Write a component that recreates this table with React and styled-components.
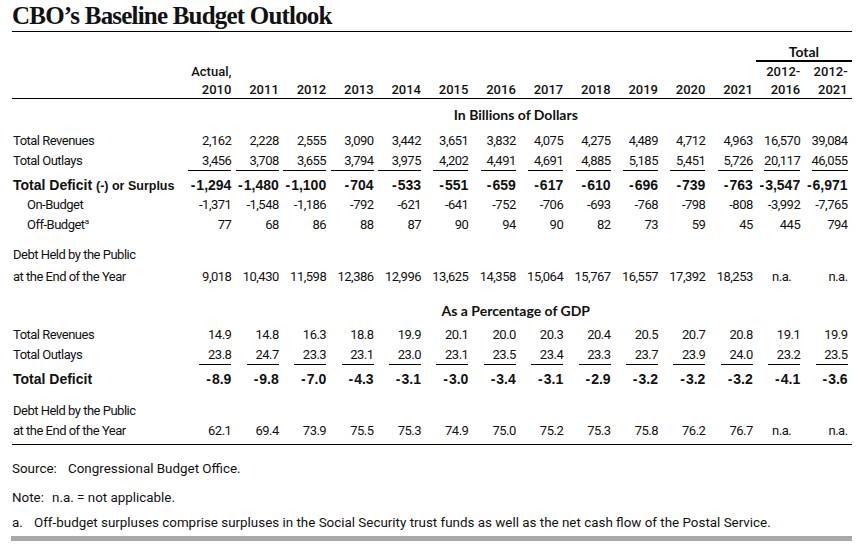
import React from 'react';
import styled, { createGlobalStyle } from 'styled-components';

const Global = createGlobalStyle`
  html, body { margin: 0; padding: 0; background: #fff; }
  body {
    font-family: "Roboto", "Liberation Sans", Arial, sans-serif;
    color: #111;
  }
`;

const Page = styled.div`
  width: 860px;
  height: 545px;
  box-sizing: border-box;
  padding: 0 8px 0 12px;
  overflow: hidden;
`;

const Title = styled.h1`
  margin: 0;
  height: 32px;
  box-sizing: border-box;
  padding-top: 1px;
  font-family: "Liberation Serif", "Times New Roman", serif;
  font-weight: 700;
  font-size: 25px;
  line-height: 29px;
  letter-spacing: -0.8px;
  border-bottom: 1px solid #000;
`;

const Row = styled.div`
  display: grid;
  grid-template-columns: 172px repeat(14, 1fr);
  padding-right: 4.4px;
  height: ${p => p.$h || 20}px;
  padding-top: ${p => p.$pt || 0}px;
  box-sizing: border-box;
  line-height: 20px;
  font-size: 13px;
  letter-spacing: -0.5px;
  border-bottom: ${p => (p.$rule ? '1px solid #000' : 'none')};
  align-items: ${p => p.$align || 'start'};
`;

const HeaderBlock = styled.div`
  border-bottom: 1px solid #000;
`;

const HeadCell = styled.div`
  text-align: right;
  white-space: nowrap;
  font-family: "Roboto", "Liberation Sans", sans-serif;
  font-weight: 500;
  font-size: 13px;
  letter-spacing: 0;
  line-height: 18px;
  padding-top: 1px;
`;

const TotalHead = styled.div`
  grid-column: 14 / span 2;
  margin-left: 3px;
  margin-right: -4.4px;
  align-self: end;
  text-align: center;
  font-family: "Lato", "Open Sans", sans-serif;
  font-weight: 700;
  font-size: 14px;
  letter-spacing: 0;
  line-height: 16px;
  border-bottom: 2px solid #000;
`;

const SectionHead = styled.div`
  grid-column: 2 / -1;
  text-align: center;
  font-family: "Lato", "Open Sans", sans-serif;
  font-weight: 700;
  font-size: 14px;
  letter-spacing: 0;
  line-height: 20px;
`;

const Label = styled.div`
  padding-left: ${p => (p.$indent ? 15 : 1)}px;
  white-space: nowrap;
`;

const BoldLabel = styled.div`
  padding-left: 1px;
  white-space: nowrap;
  font-family: "Liberation Sans", Arial, sans-serif;
  font-weight: 700;
  font-size: 14px;
  letter-spacing: 0;
`;

const Small = styled.span`
  font-size: 12.5px;
`;

const Sup = styled.sup`
  font-size: 8px;
  line-height: 0;
  vertical-align: 5px;
`;

const Cell = styled.div`
  text-align: right;
  white-space: nowrap;
  padding-right: ${p => p.$inset || 0}px;
`;

const Val = styled.span`
  display: inline-block;
  min-width: ${p => p.$ul || 0}px;
  text-align: right;
  line-height: ${p => (p.$ul ? 19 : 20)}px;
  border-bottom: ${p => (p.$ul ? '1px solid #000' : 'none')};
`;

const BoldVal = styled.span`
  font-family: "Liberation Sans", Arial, sans-serif;
  font-weight: 700;
  font-size: 14px;
  letter-spacing: 0;
`;

const Minus = styled.span`
  margin-right: 1px;
`;

const Spacer = styled.div`
  height: ${p => p.$h}px;
`;

const Notes = styled.div`
  padding-top: ${p => p.$pt}px;
  font-size: 13.4px;
`;

const NoteLine = styled.div`
  display: flex;
  height: ${p => p.$h}px;
  line-height: 20px;
  white-space: nowrap;
`;

const NoteKey = styled.span`
  flex: none;
  width: ${p => p.$w}px;
`;

const GrayBar = styled.div`
  height: 5px;
  background: #a9a9a9;
  margin-left: -1px;
`;

const headTop = ['Actual,', '', '', '', '', '', '', '', '', '', '', '', '2012-', '2012-'];
const headYears = ['2010', '2011', '2012', '2013', '2014', '2015', '2016', '2017', '2018', '2019', '2020', '2021', '2016', '2021'];

const billions = {
  rev: ['2,162', '2,228', '2,555', '3,090', '3,442', '3,651', '3,832', '4,075', '4,275', '4,489', '4,712', '4,963', '16,570', '39,084'],
  out: ['3,456', '3,708', '3,655', '3,794', '3,975', '4,202', '4,491', '4,691', '4,885', '5,185', '5,451', '5,726', '20,117', '46,055'],
  def: ['-1,294', '-1,480', '-1,100', '-704', '-533', '-551', '-659', '-617', '-610', '-696', '-739', '-763', '-3,547', '-6,971'],
  on: ['-1,371', '-1,548', '-1,186', '-792', '-621', '-641', '-752', '-706', '-693', '-768', '-798', '-808', '-3,992', '-7,765'],
  off: ['77', '68', '86', '88', '87', '90', '94', '90', '82', '73', '59', '45', '445', '794'],
  debt: ['9,018', '10,430', '11,598', '12,386', '12,996', '13,625', '14,358', '15,064', '15,767', '16,557', '17,392', '18,253', 'n.a.', 'n.a.'],
};

const billionsUl = [43, 43, 43, 43, 43, 35, 35, 35, 35, 35, 35, 35, 35, 35];

const gdp = {
  rev: ['14.9', '14.8', '16.3', '18.8', '19.9', '20.1', '20.0', '20.3', '20.4', '20.5', '20.7', '20.8', '19.1', '19.9'],
  out: ['23.8', '24.7', '23.3', '23.1', '23.0', '23.1', '23.5', '23.4', '23.3', '23.7', '23.9', '24.0', '23.2', '23.5'],
  def: ['-8.9', '-9.8', '-7.0', '-4.3', '-3.1', '-3.0', '-3.4', '-3.1', '-2.9', '-3.2', '-3.2', '-3.2', '-4.1', '-3.6'],
  debt: ['62.1', '69.4', '73.9', '75.5', '75.3', '74.9', '75.0', '75.2', '75.3', '75.8', '76.2', '76.7', 'n.a.', 'n.a.'],
};

function NumRow({ label, values, ul, h, pt, rule }) {
  return (
    <Row $h={h} $pt={pt} $rule={rule}>
      {label}
      {values.map((v, i) => (
        <Cell key={i} $inset={v === 'n.a.' && i === 12 ? 9 : 0}>
          <Val $ul={Array.isArray(ul) ? ul[i] : ul}>{v}</Val>
        </Cell>
      ))}
    </Row>
  );
}

function BoldRow({ label, values, h, pt }) {
  return (
    <Row $h={h} $pt={pt}>
      {label}
      {values.map((v, i) => (
        <Cell key={i}>
          <BoldVal>
            <Minus>-</Minus>
            {v.slice(1)}
          </BoldVal>
        </Cell>
      ))}
    </Row>
  );
}

export default function App() {
  return (
    <>
      <Global />
      <Page>
        <Title>CBO’s Baseline Budget Outlook</Title>
        <HeaderBlock>
          <Row $h={30}>
            <TotalHead>Total</TotalHead>
          </Row>
          <Row $h={18}>
            <div />
            {headTop.map((t, i) => (
              <HeadCell key={i}>{t}</HeadCell>
            ))}
          </Row>
          <Row $h={18}>
            <div />
            {headYears.map((t, i) => (
              <HeadCell key={i}>{t}</HeadCell>
            ))}
          </Row>
        </HeaderBlock>

        <Row $h={32} $align="center">
          <div />
          <SectionHead>In Billions of Dollars</SectionHead>
        </Row>
        <NumRow label={<Label>Total Revenues</Label>} values={billions.rev} />
        <NumRow label={<Label>Total Outlays</Label>} values={billions.out} ul={billionsUl} />
        <BoldRow
          h={24}
          pt={4}
          label={
            <BoldLabel>
              Total Deficit <Small>(-) or Surplus</Small>
            </BoldLabel>
          }
          values={billions.def}
        />
        <NumRow label={<Label $indent>On-Budget</Label>} values={billions.on} />
        <NumRow
          label={
            <Label $indent>
              Off-Budget<Sup>a</Sup>
            </Label>
          }
          values={billions.off}
        />
        <Spacer $h={10} />
        <Row>
          <Label>Debt Held by the Public</Label>
        </Row>
        <NumRow h={24} pt={2} label={<Label>at the End of the Year</Label>} values={billions.debt} />

        <Row $h={36} $pt={12}>
          <div />
          <SectionHead>As a Percentage of GDP</SectionHead>
        </Row>
        <NumRow label={<Label>Total Revenues</Label>} values={gdp.rev} />
        <NumRow label={<Label>Total Outlays</Label>} values={gdp.out} ul={32} />
        <BoldRow h={24} pt={4} label={<BoldLabel>Total Deficit</BoldLabel>} values={gdp.def} />
        <Spacer $h={12} />
        <Row>
          <Label>Debt Held by the Public</Label>
        </Row>
        <NumRow h={24} rule label={<Label>at the End of the Year</Label>} values={gdp.debt} />

        <Notes $pt={14}>
          <NoteLine $h={29}>
            <NoteKey $w={56}>Source:</NoteKey>
            <span>Congressional Budget Office.</span>
          </NoteLine>
          <NoteLine $h={25}>
            <NoteKey $w={40}>Note:</NoteKey>
            <span>n.a. = not applicable.</span>
          </NoteLine>
          <NoteLine $h={23}>
            <NoteKey $w={22}>a.</NoteKey>
            <span>
              Off-budget surpluses comprise surpluses in the Social Security trust funds as well as the net cash flow
              of the Postal Service.
            </span>
          </NoteLine>
        </Notes>
        <GrayBar />
      </Page>
    </>
  );
}
